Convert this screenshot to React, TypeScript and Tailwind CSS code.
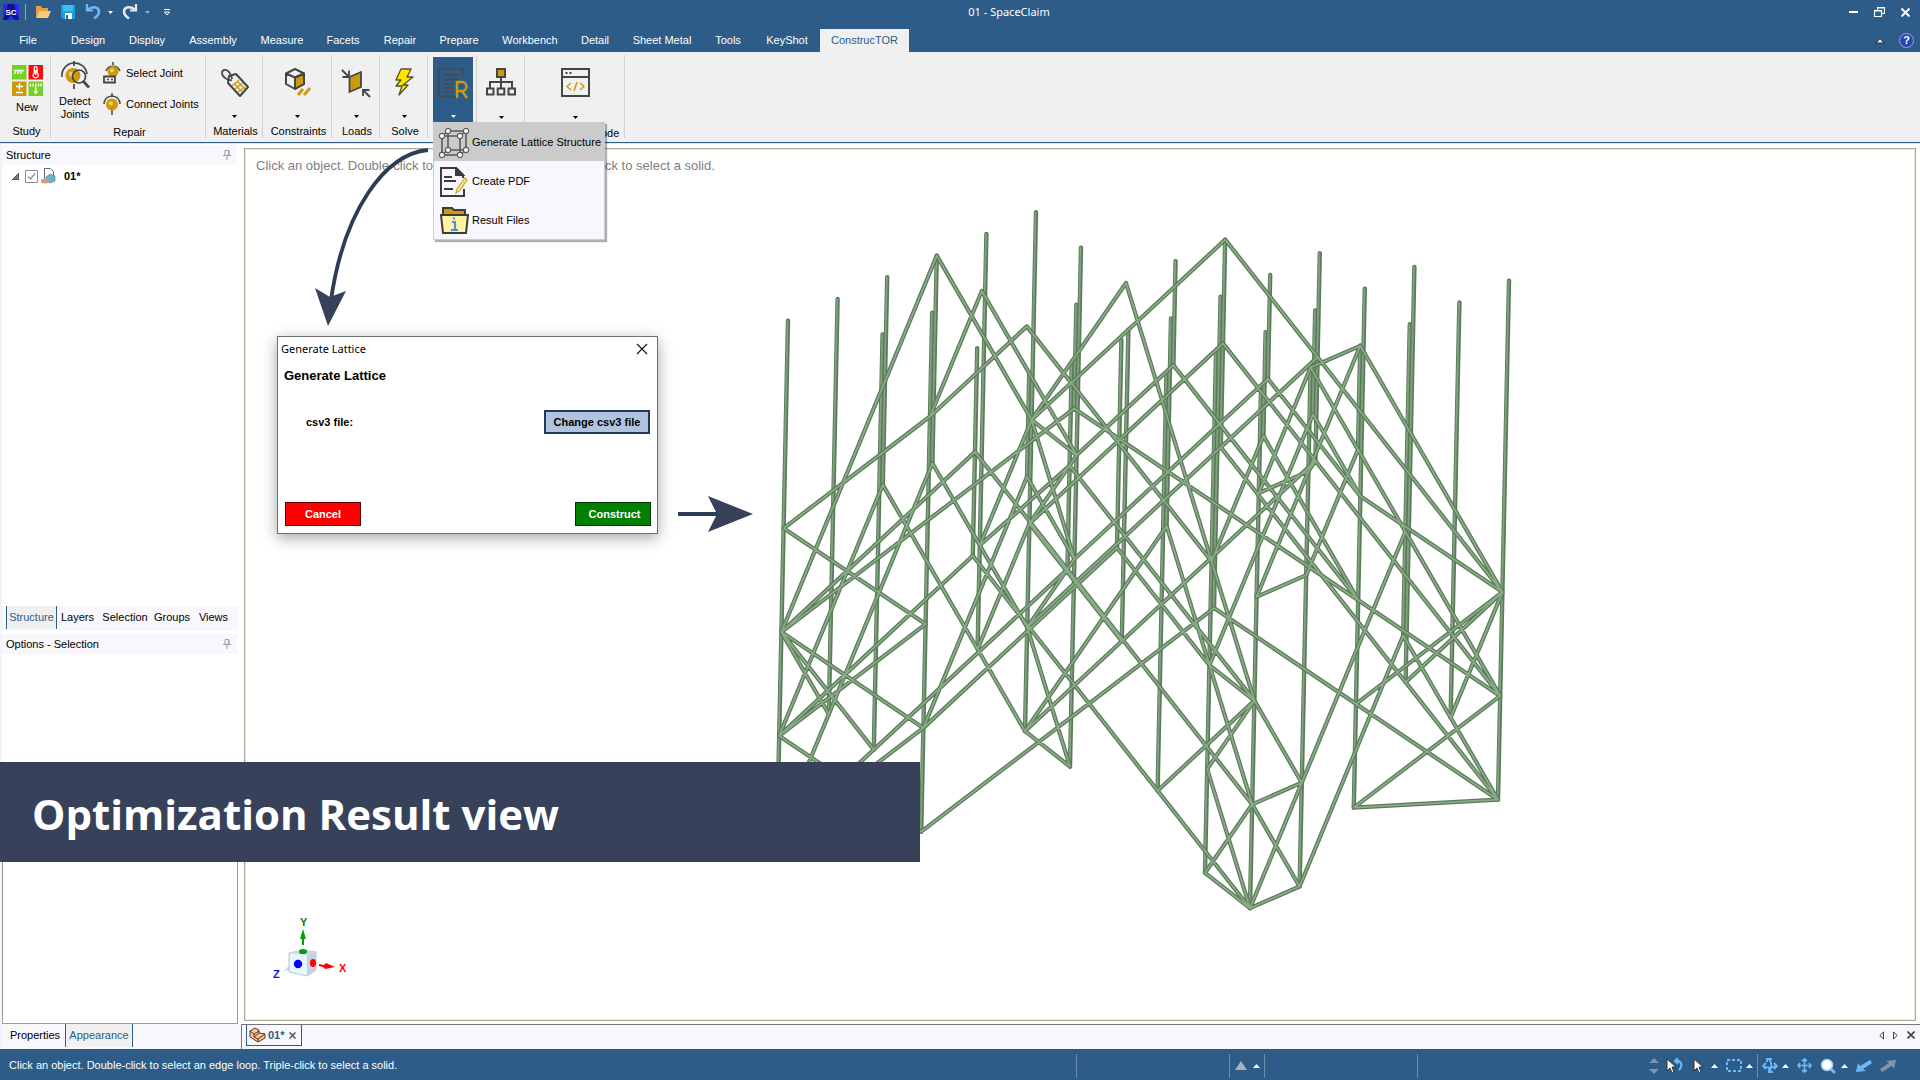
import React from "react";

/* ---------- lattice model ---------- */

type Node = [number, number, number];

const project = ([i, j, k]: Node) => [
  788 + 49.6 * i + 45 * j - 2.2 * k,
  320.7 - 21.7 * i + 35.4 * j + 103.8 * k,
];

// column i, column j, first level, last level
const columns: [number, number, number, number][] = [
  [0, 0, 0, 5], [1, 0, 0, 4], [2, 0, 0, 2], [1, 1, 0, 4], [3, 0, 0, 2], [2, 1, 0, 5],
  [4, 0, 0, 4], [2, 2, 0, 2], [5, 0, 0, 5], [4, 1, 1, 2], [5, 1, 0, 5], [3, 3, 0, 2],
  [4, 2, 0, 1], [6, 1, 1, 4], [4, 3, 0, 2], [6, 2, 0, 1], [5, 3, 0, 2], [4, 4, 0, 4],
  [7, 2, 0, 2], [6, 3, 0, 3], [5, 4, 0, 5], [7, 3, 0, 1], [6, 4, 0, 1], [5, 5, 0, 5],
  [8, 3, 0, 2], [7, 4, 0, 1], [6, 5, 0, 5], [8, 4, 0, 5], [7, 5, 0, 1], [9, 4, 0, 4],
  [8, 5, 0, 3], [9, 5, 0, 4], [10, 5, 0, 5],
];

// each row holds two nodes: i j k  i j k
const braces: [number, number, number, number, number, number][] = [
  [3, 0, 0, 0, 0, 3], [3, 0, 0, 5, 0, 2], [3, 0, 2, 0, 0, 5], [3, 1, 0, 2, 1, 1],
  [3, 1, 0, 5, 1, 2], [3, 2, 0, 2, 1, 1], [2, 1, 1, 0, 0, 2], [3, 2, 0, 5, 4, 2],
  [5, 2, 0, 5, 0, 2], [5, 2, 0, 5, 5, 3], [7, 2, 0, 5, 0, 2], [7, 2, 0, 10, 5, 3],
  [5, 0, 2, 4, 0, 3], [5, 0, 2, 5, 1, 2], [5, 0, 2, 5, 1, 3], [4, 1, 2, 2, 1, 4],
  [4, 1, 2, 5, 1, 3], [6, 2, 1, 5, 1, 2], [3, 3, 1, 4, 0, 3], [5, 1, 2, 5, 0, 3],
  [7, 2, 1, 5, 0, 3], [3, 3, 1, 5, 5, 3], [4, 2, 1, 0, 0, 3], [4, 2, 1, 10, 5, 4],
  [2, 2, 1, 0, 0, 3], [2, 2, 1, 5, 5, 4], [5, 0, 3, 6, 1, 4], [4, 3, 2, 5, 4, 3],
  [2, 0, 2, 0, 0, 4], [2, 0, 2, 5, 0, 5], [3, 0, 2, 5, 0, 4], [2, 2, 2, 5, 5, 5],
  [2, 2, 2, 0, 0, 4], [0, 0, 2, 2, 1, 3], [2, 1, 3, 0, 0, 4], [0, 0, 3, 2, 1, 4],
  [0, 0, 3, 1, 1, 4], [0, 0, 3, 1, 0, 4], [0, 0, 4, 2, 1, 5], [2, 1, 4, 0, 0, 5],
  [0, 0, 5, 3, 3, 2], [7, 3, 1, 5, 1, 3], [2, 1, 4, 4, 3, 2], [8, 3, 1, 5, 0, 4],
  [5, 1, 3, 5, 0, 4], [5, 0, 4, 5, 1, 5], [4, 0, 4, 5, 0, 3], [5, 0, 5, 5, 1, 5],
  [5, 0, 5, 5, 3, 2], [8, 3, 2, 5, 0, 5], [2, 1, 5, 6, 3, 3], [6, 3, 3, 10, 5, 5],
  [7, 3, 1, 8, 4, 2], [8, 4, 2, 10, 5, 3], [7, 2, 1, 10, 5, 4], [6, 2, 1, 8, 4, 3],
  [7, 2, 2, 10, 5, 5], [6, 4, 1, 5, 4, 2], [6, 4, 1, 8, 4, 3], [7, 4, 1, 8, 4, 2],
  [7, 4, 1, 5, 4, 3], [6, 5, 0, 5, 5, 1], [6, 5, 0, 10, 5, 4], [7, 5, 0, 6, 5, 0],
  [7, 5, 0, 5, 5, 2], [7, 5, 0, 10, 5, 3], [5, 5, 1, 6, 5, 1], [6, 5, 1, 8, 3, 2],
  [7, 5, 1, 6, 5, 2], [6, 5, 2, 5, 5, 2], [8, 5, 2, 6, 5, 4], [8, 5, 3, 6, 5, 5],
  [8, 5, 3, 10, 5, 5], [10, 5, 3, 9, 5, 4], [10, 5, 3, 8, 4, 4], [10, 5, 3, 9, 4, 4],
  [10, 5, 4, 8, 4, 5], [8, 4, 5, 10, 5, 5], [5, 3, 2, 5, 5, 4], [5, 4, 4, 5, 5, 5],
  [5, 4, 3, 5, 5, 3], [5, 5, 3, 5, 4, 4], [5, 5, 3, 4, 4, 4], [5, 5, 3, 6, 5, 4],
  [6, 5, 4, 5, 5, 4], [5, 5, 4, 5, 4, 5], [5, 5, 4, 6, 5, 5], [6, 5, 4, 5, 5, 5],
  [5, 4, 5, 5, 5, 5], [5, 5, 5, 6, 5, 5],
];

const segment = (a: Node, b: Node) => {
  const [x1, y1] = project(a);
  const [x2, y2] = project(b);
  return `M${x1.toFixed(1)} ${y1.toFixed(1)}L${x2.toFixed(1)} ${y2.toFixed(1)}`;
};

const columnPath = columns.map(([i, j, a, b]) => segment([i, j, a], [i, j, b])).join("");
const bracePath = braces.map((e) => segment([e[0], e[1], e[2]], [e[3], e[4], e[5]])).join("");

function Lattice() {
  return (
    <svg className="absolute left-[515px] top-[41px] h-[740px] w-[780px]" viewBox="760 190 780 740" fill="none" strokeLinecap="round">
      <path d={columnPath} stroke="#5a7b58" strokeWidth="4.4" />
      <path d={columnPath} stroke="#82a180" strokeWidth="1.8" transform="translate(-0.4 0)" />
      <path d={bracePath} stroke="#5a7b58" strokeWidth="4.2" />
      <path d={bracePath} stroke="#8bab88" strokeWidth="1.8" />
    </svg>
  );
}

/* ---------- icons ---------- */

const G = "#454545";
const O = "#cc9a0b";

const Caret = ({ className = "" }: { className?: string }) => (
  <svg className={"h-[3px] w-[5px] " + className} viewBox="0 0 5 3"><path d="M0 0h5L2.500 3z" fill="currentColor" /></svg>
);
const CaretUp = () => (
  <svg className="h-1 w-[7px] text-white" viewBox="0 0 7 4"><path d="M0 4h7L3.5 0z" fill="currentColor" /></svg>
);

const NewIcon = () => (
  <svg className="h-[31px] w-[31px]" viewBox="0 0 31 31" fill="none" stroke="#fff" strokeWidth="1.3">
    <path d="M0 0h14.500v14.500H0zM16.500 16.500H31V31H16.500z" fill="#76cf26" stroke="none" />
    <path d="M16.500 0H31v14.500H16.500z" fill="#f80c12" stroke="none" />
    <path d="M0 16.500h14.500V31H0z" fill={O} stroke="none" />
    <path d="M2 5.500h10M4 6l-1.500 3M7 6L5.500 9M10 6L8.500 9" />
    <path d="M22.300 3a1.400 1.400 0 0 1 2.800 0v5a2.600 2.600 0 1 1-2.800 0zM23.700 5v5" />
    <path d="M4 21.500h7M7.500 18v7M4 27.500h7" />
    <path d="M18.500 18.500v3M21 18.500v3M23.700 18.500V28M26.500 18.500v3M29 18.500v3M22 26l1.700 2.500L25.500 26" />
  </svg>
);

const Ball = ({ cx, cy, r }: { cx: number; cy: number; r: number }) => (
  <>
    <circle cx={cx} cy={cy} r={r} fill={O} stroke="none" />
    <circle cx={cx - r * 0.2} cy={cy - r * 0.2} r={r * 0.35} fill="#ecd07a" stroke="none" />
  </>
);

const DetectIcon = () => (
  <svg className="h-7 w-[30px]" viewBox="0 0 30 28" fill="none" stroke={G} strokeWidth="2">
    <path d="M2 16A12.500 12.500 0 0 1 27 13M14 0v5M14 23v5" strokeWidth="1.700" />
    <Ball cx={13} cy={14.500} r={7.500} />
    <circle cx="19" cy="15.500" r="6.500" strokeWidth="1.700" />
    <path d="M23.500 20.500l5.500 6" strokeWidth="2.600" />
  </svg>
);
const SelectJointIcon = () => (
  <svg className="h-[22px] w-[18px]" viewBox="0 0 18 22" fill="none" stroke={G} strokeWidth="1.500">
    <path d="M3 9a7.500 7.500 0 0 1 14 0M10 0v3" />
    <Ball cx={10} cy={9.500} r={5.500} />
    <path d="M1 14.500h11v6H1z" fill="#efefef" strokeWidth="1.800" />
    <path d="M4 17.500h2M8 17.500h2" />
  </svg>
);
const ConnectJointIcon = () => (
  <svg className="h-[22px] w-[18px]" viewBox="0 0 18 22" fill="none" stroke={G} strokeWidth="1.500">
    <path d="M1 11a8 8 0 0 1 16 0M9 0v4M9 17v5" />
    <Ball cx={9} cy={11.500} r={6} />
  </svg>
);
const MaterialsIcon = () => (
  <svg className="h-[30px] w-[30px]" viewBox="0 0 30 30" fill="none" stroke={G} strokeWidth="2">
    <path d="M8 15l1-7 7-2 12 13-8 9z" fill="#efefef" strokeLinejoin="round" />
    <path d="M14 15l8 9M17 13l8 8M12 18l7-6M15 21l8-6M18 24l7-5" stroke={O} strokeWidth="1.300" />
    <path d="M12 12C8 13 2 9 2 5s5-4 7-1 3 5 3 7" strokeWidth="1.700" />
  </svg>
);
const ConstraintsIcon = () => (
  <svg className="h-[28px] w-[28px]" viewBox="0 0 28 28" fill="none" stroke={G} strokeWidth="2" strokeLinejoin="round">
    <path d="M11 9.500l9-4V16l-9 5z" fill={O} />
    <path d="M2 5.500L11 1l9 4.500V16l-9 5-9-5zM2 5.500l9 4 9-4M11 9.500V21" />
    <path d="M14 27l5-6M20 27l6-7" stroke={O} strokeWidth="3" />
  </svg>
);
const LoadsIcon = () => (
  <svg className="h-[30px] w-[30px]" viewBox="0 0 30 30" fill="none" stroke={G} strokeWidth="1.800">
    <path d="M8.500 9L20 4v15L8.500 24z" fill={O} />
    <path d="M1 2l6 6M8 2.500V9H1.500M29 29l-6-6M22 28v-6h6.500" />
  </svg>
);
const SolveIcon = () => (
  <svg className="h-[28px] w-5" viewBox="0 0 20 28"><path d="M7 1h10l-4 8h6L9 17h5L5 27l3-9H2l5-6H2z" fill="#ffe500" stroke="#55502a" strokeWidth="1.300" strokeLinejoin="round" /></svg>
);
const ReportIcon = () => (
  <svg className="h-8 w-8" viewBox="0 0 32 32" fill="none" stroke="#404c57" strokeWidth="2.200">
    <path d="M26 11V1.500H2v28h18" />
    <path d="M6 8h16M6 12.500h16M6 17h10M6 21h10M6 25h10" />
    <path d="M20 31V15h5a4.500 4.500 0 0 1 0 9h-5M25 24l5 7" stroke={O} strokeWidth="2.400" />
  </svg>
);
const TreeIcon = () => (
  <svg className="h-[28px] w-[30px]" viewBox="0 0 30 28" fill="none" stroke={G} strokeWidth="2">
    <path d="M11 1h8v8h-8z" fill={O} />
    <path d="M15 9v5M4 20v-6h22v6M15 14v6M1 20.500h6.500v6H1zM11.700 20.500h6.600v6h-6.600zM22.500 20.500H29v6h-6.500z" />
  </svg>
);
const CodeIcon = () => (
  <svg className="h-[29px] w-[29px]" viewBox="0 0 29 29" fill="none" stroke={G} strokeWidth="2">
    <path d="M1 1h27v27H1zM1 9h27" /><path d="M4.500 5h2M8.500 5h2" />
    <path d="M10 15l-4 3.500 4 3.500M19 15l4 3.500-4 3.500M16 14l-3 9" stroke={O} strokeWidth="1.500" />
  </svg>
);
const LatticeIcon = () => (
  <svg className="h-[30px] w-8" viewBox="0 0 32 30" fill="none" stroke="#5a5a5a" strokeWidth="1.600">
    <path d="M4 8h18v19H4zM10 3h18v19H10zM4 8l6-5M22 8l6-5M4 27l6-5M22 27l6-5" />
    <g fill="#fff">
      {[[4, 8], [22, 8], [4, 27], [22, 27], [10, 3], [28, 3], [10, 22], [28, 22]].map(([x, y]) => (
        <circle key={`${x}-${y}`} cx={x} cy={y} r="2.600" strokeWidth="1.100" />
      ))}
    </g>
  </svg>
);
const PdfIcon = () => (
  <svg className="h-[30px] w-8" viewBox="0 0 32 30" fill="none" stroke="#3c3c3c" strokeWidth="2">
    <path d="M26 22v7H3V1h15l7 7v3" /><path d="M18 1v7h7z" fill="#3c3c3c" />
    <path d="M6 10h8M6 14h12M6 22h9" />
    <path d="M18 26l1-4 8-11 2 2-8 11z" stroke="#d9a92c" strokeWidth="1.300" fill="#fff3c8" />
  </svg>
);
const ResultIcon = () => (
  <svg className="h-[29px] w-8" viewBox="0 0 32 29" fill="none" stroke="#3c3c3c" strokeWidth="2">
    <path d="M5 9V2h9l2 2h11v5z" fill={O} />
    <path d="M3 9h27l-2 18H5z" fill="#fff5a0" />
    <path d="M14 16h3v8M13 24h7M16 11.500v2" stroke="#4a90f0" strokeWidth="2.200" />
  </svg>
);
const Pin = () => (
  <svg className="h-[10px] w-2" viewBox="0 0 8 10" fill="none" stroke="#9a9aa0"><path d="M2 .5h4v5H2zM0 5.500h8M4 6v4M5.500 1v4" /></svg>
);
const Cursor = () => (
  <svg className="h-4 w-[11px]" viewBox="0 0 11 16"><path d="M1 1v12l3-3 2 5 2-1-2-5h4z" fill="#fff" stroke="#333" strokeWidth="1" /></svg>
);

/* ---------- title bar and ribbon ---------- */

function TitleBar() {
  return (
    <header className="relative flex h-6 items-center bg-[#2d5c88] pl-[3px] text-white">
      <div className="flex items-center">
        <svg className="h-4 w-4" viewBox="0 0 16 16"><path d="M0 0h16v16H0z" fill="#2a2af0" /><path d="M0 16L5 0h6l5 16h-4L8 11l-4 5z" fill="#10108a" /><text x="8" y="11" fontSize="8" fontWeight="700" textAnchor="middle" fill="#fff" fontFamily="Liberation Sans">SC</text></svg>
        <span className="mx-[6px] h-4 w-px bg-[#8ba6c0]" />
        <button aria-label="Open" className="ml-[3px]">
          <svg className="h-4 w-4" viewBox="0 0 16 16"><path d="M1 2h5l1 2h6v3H4l-3 7z" fill="#e2a040" /><path d="M4 7h12l-3 7H1z" fill="#fbc877" /></svg>
        </button>
        <button aria-label="Save" className="ml-[10px]">
          <svg className="h-[14px] w-[14px]" viewBox="0 0 14 14"><path d="M0 0h14v14H2l-2-2z" fill="#1c9ed8" /><path d="M2 0h10v6H2z" fill="#3cc0f4" /><path d="M4 8h7v6H4z" fill="#fff" /><path d="M5 10h2v4H5z" fill="#1a6fa0" /></svg>
        </button>
        <button aria-label="Undo" className="ml-[10px] flex items-center gap-[7px]">
          <svg className="h-4 w-4" viewBox="0 0 16 16" fill="none" stroke="#72b5f5" strokeWidth="2.600"><path d="M3 5.500c6-4 11-2 11 2 0 3-2 5-5 7" /><path d="M2 0v6.500h6" strokeWidth="2.200" /></svg>
          <Caret />
        </button>
        <button aria-label="Redo" className="ml-[9px] flex items-center gap-[7px]">
          <svg className="h-4 w-4" viewBox="0 0 16 16" fill="none" stroke="#e8e8e8" strokeWidth="2.600"><path d="M13 5.500c-6-4-11-2-11 2 0 3 2 5 5 7" /><path d="M14 0v6.500H8" strokeWidth="2.200" /></svg>
          <Caret className="text-[#9fb0c0]" />
        </button>
        <button aria-label="Customize toolbar" className="ml-[14px]">
          <svg className="h-[7px] w-[6px]" viewBox="0 0 6 7" fill="none" stroke="#fff"><path d="M0 .5h6M.5 3L3 6l2.500-3z" /></svg>
        </button>
      </div>
      <h1 className="absolute inset-x-0 pl-[98px] text-center font-['Noto_Sans','Open_Sans',sans-serif] text-[11px] leading-6">01 - SpaceClaim</h1>
      <div className="relative ml-auto flex items-center gap-4 pr-[10px]">
        <button aria-label="Minimize"><svg className="h-[10px] w-[9px]" viewBox="0 0 9 10"><path d="M0 4h9v2H0z" fill="#fff" /></svg></button>
        <button aria-label="Restore"><svg className="h-[10px] w-[11px]" viewBox="0 0 11 10" fill="none" stroke="#fff"><path d="M3.500 3V.5h7v6H8M.5 3.500h7v6h-7zM.5 4h7M3 1h8" strokeWidth="1.200" /></svg></button>
        <button aria-label="Close"><svg className="h-[9px] w-[9px]" viewBox="0 0 9 9" stroke="#fff" strokeWidth="2"><path d="M.5.5l8 8M8.500.5l-8 8" /></svg></button>
      </div>
    </header>
  );
}

const tabs: [string, string][] = [
  ["File", "w-14"], ["Design", "w-16"], ["Display", "w-[54px]"], ["Assembly", "w-[78px]"],
  ["Measure", "w-[60px]"], ["Facets", "w-[62px]"], ["Repair", "w-[52px]"], ["Prepare", "w-[66px]"],
  ["Workbench", "w-[76px]"], ["Detail", "w-[54px]"], ["Sheet Metal", "w-20"], ["Tools", "w-[52px]"],
  ["KeyShot", "w-[66px]"],
];

function TabRow() {
  return (
    <nav className="flex h-7 items-end bg-[#2d5c88] text-[11px] text-white">
      {tabs.map(([t, w]) => (
        <button key={t} className={`h-[23px] text-center ${w}`}>{t}</button>
      ))}
      <button className="h-[23px] w-[89px] bg-[#f0f0f0] text-[#2d5c88]">ConstrucTOR</button>
      <div className="ml-auto flex h-[23px] items-center gap-[14px] pr-[6px]">
        <button aria-label="Collapse ribbon"><svg className="h-[7px] w-[10px]" viewBox="0 0 10 7"><path d="M1 6l4-4.500L9 6z" fill="#e8eef4" stroke="#333" /></svg></button>
        <button aria-label="Help" className="flex h-[15px] w-[15px] items-center justify-center rounded-full border border-[#9fa8c4] bg-[#2446b8] text-[11px] font-bold leading-none">?</button>
      </div>
    </nav>
  );
}

function Group({ label, width, icon, children }: { label: string; width: string; icon?: React.ReactNode; children?: React.ReactNode }) {
  return (
    <section className={`relative flex flex-col pt-1 ${width}`}>
      <div className="h-[65px]">
        {icon ? (
          <button aria-label={label || "More"} className="flex h-full w-full flex-col items-center justify-between pb-[2px] pt-3">
            {icon}
            <Caret className="text-black" />
          </button>
        ) : children}
      </div>
      <div className="whitespace-nowrap pl-[2px] text-center leading-[22px]">{label}</div>
      <span className="absolute right-0 top-[3px] h-[83px] w-px bg-[#d0d0d0]" />
    </section>
  );
}

function Ribbon() {
  return (
    <div className="relative z-20 flex h-[91px] border-b border-[#2d5c88] bg-[#f0f0f0] text-[11px] text-black shadow-[0_1px_0_#dfe6ee]">
      <Group label="Study" width="w-[51px]">
        <button className="flex w-full flex-col items-center gap-[3px] pl-[3px] pt-[9px] leading-4"><NewIcon />New</button>
      </Group>
      <Group label="Repair" width="w-[155px]">
        <div className="flex pl-[6px]">
          <button className="flex w-[36px] flex-col items-center gap-[6px] pt-[5px] leading-[13px]"><DetectIcon /><span>Detect Joints</span></button>
          <div className="ml-[10px] flex flex-col gap-[9px] pt-[6px]">
            <button className="flex items-center gap-[5px]"><SelectJointIcon />Select Joint</button>
            <button className="flex items-center gap-[5px] whitespace-nowrap"><ConnectJointIcon />Connect Joints</button>
          </div>
        </div>
      </Group>
      <Group label="Materials" width="w-[57px]" icon={<MaterialsIcon />} />
      <Group label="Constraints" width="w-[69px]" icon={<ConstraintsIcon />} />
      <Group label="Loads" width="w-12" icon={<LoadsIcon />} />
      <Group label="Solve" width="w-12" icon={<SolveIcon />} />
      <section className="relative w-[49px] pl-[5px] pt-[5px]">
        <button aria-label="Report" aria-expanded="true" className="flex h-[65px] w-10 flex-col items-center justify-between bg-[#2d5c88] pb-1 pt-[10px] text-white">
          <ReportIcon />
          <Caret />
        </button>
        <ResultMenu />
        <span className="absolute right-0 top-[3px] h-[83px] w-px bg-[#d0d0d0]" />
      </section>
      <Group label="" width="w-12" icon={<TreeIcon />} />
      <Group label="" width="w-[100px]" icon={<CodeIcon />} />
      <div className="-ml-[24px] w-10 self-end leading-[18px]">ode</div>
    </div>
  );
}

function ResultMenu() {
  const items: [string, React.ReactNode][] = [
    ["Generate Lattice Structure", <LatticeIcon />],
    ["Create PDF", <PdfIcon />],
    ["Result Files", <ResultIcon />],
  ];
  return (
    <ul className="absolute left-[5px] top-[70px] z-30 w-[172px] border border-t-0 border-[#cbcbcb] bg-[#f7f7fc] shadow-[2px_2px_1px_#00000050]">
      {items.map(([t, icon], n) => (
        <li key={t}>
          <button className={"flex h-[39px] w-full items-center gap-[2px] whitespace-nowrap pl-1 pt-[2px] " + (n === 0 ? "bg-[#cbcbcb]" : "")}>
            {icon}
            {t}
          </button>
        </li>
      ))}
    </ul>
  );
}

/* ---------- side panels ---------- */

function PanelHeader({ title }: { title: string }) {
  return (
    <div className="mr-1 flex h-5 items-center justify-between bg-[#f7f7fc] pl-1 pr-[6px]">
      <h2>{title}</h2>
      <button aria-label="Pin panel"><Pin /></button>
    </div>
  );
}

function Sidebar() {
  return (
    <aside className="flex w-[241px] flex-col border-l-2 border-[#f2f2fa] bg-white text-[11px] text-black">
      <div className="flex h-[463px] flex-col pt-[2px]">
        <PanelHeader title="Structure" />
        <label className="flex items-center gap-[2px] pl-[10px] pt-[3px] font-bold">
          <svg className="mr-1 h-[7px] w-[7px]" viewBox="0 0 7 7"><path d="M7 0v7H0z" fill="#777" stroke="#333" strokeWidth=".8" /></svg>
          <input type="checkbox" defaultChecked className="peer sr-only" />
          <svg className="h-[13px] w-[13px]" viewBox="0 0 13 13" fill="none" stroke="#909090"><path d="M.5.5h12v12H.5z" /><path d="M3 6.500l2.500 2.500 4.500-5.500" strokeWidth="1.300" /></svg>
          <svg className="ml-px h-4 w-[15px]" viewBox="0 0 15 16"><path d="M3.500.5h6l3 3v9h-9z" fill="#fff" stroke="#5f6f80" /><path d="M5 9l4-3 5 2v5l-5 2-4-2z" fill="#6db3d0" stroke="#3a7898" strokeWidth=".6" /><ellipse cx="4" cy="13" rx="4" ry="2.500" fill="#cf9c75" /></svg>
          <span className="ml-[6px]">01*</span>
        </label>
      </div>
      <div className="mr-[3px] flex h-[25px] items-start bg-[#f7f7fc] pl-1 leading-[23px]">
        <button className="w-[51px] border-x border-[#2d5c88] bg-[#f0f0f0] text-[#2d5c88]">Structure</button>
        <button className="w-[41px]">Layers</button>
        <button className="w-[54px]">Selection</button>
        <button className="w-10">Groups</button>
        <button className="w-[43px]">Views</button>
      </div>
      <div className="flex h-[226px] flex-col pt-[3px]">
        <PanelHeader title="Options - Selection" />
      </div>
      <div className="mr-[3px] flex-1 border border-t-0 border-[#9a9aa0]" />
      <div className="flex h-[25px] items-start bg-[#f7f7fc] pl-[3px] leading-[23px]">
        <button className="w-[60px]">Properties</button>
        <button className="w-[68px] border-x border-[#2d5c88] bg-[#f0f0f0] text-[#2d5c88]">Appearance</button>
      </div>
    </aside>
  );
}

/* ---------- viewport ---------- */

function Dialog() {
  return (
    <form role="dialog" aria-label="Generate Lattice" className="absolute left-8 top-[187px] flex h-[198px] w-[381px] flex-col border border-[#707070] bg-white text-[11px] font-bold text-black shadow-[0_4px_14px_#00000059]">
      <div className="flex h-6 items-center justify-between pl-[3px] pr-[9px] font-['Noto_Sans','Open_Sans',sans-serif] font-normal">
        <span>Generate Lattice</span>
        <button type="button" aria-label="Close"><svg className="h-3 w-3" viewBox="0 0 12 12" stroke="#111" strokeWidth="1.100"><path d="M1 1l10 10M11 1L1 11" /></svg></button>
      </div>
      <h2 className="pl-[6px] pt-[5px] text-[13px] leading-5">Generate Lattice</h2>
      <div className="mt-6 flex items-center justify-between pl-7 pr-[7px]">
        <label htmlFor="csv">csv3 file:</label>
        <button id="csv" type="button" className="h-6 w-[106px] whitespace-nowrap border-2 border-[#203a5e] bg-[#b0c4de]">Change csv3 file</button>
      </div>
      <div className="mb-[7px] mt-auto flex justify-between pl-[7px] pr-[6px] text-white">
        <button type="button" className="h-6 w-[76px] border border-[#5a0000] bg-[#ff0000]">Cancel</button>
        <button type="button" className="h-6 w-[76px] border border-[#003400] bg-[#008000] pl-[3px]">Construct</button>
      </div>
    </form>
  );
}

function AxisTriad() {
  return (
    <svg className="absolute bottom-[37px] left-[26px] h-[66px] w-[80px]" viewBox="0 0 80 66" fontFamily="Liberation Sans" fontWeight="700" fontSize="11">
      <text x="29" y="9" fill="#0a7a0a">Y</text>
      <text x="68" y="55" fill="#f00">X</text>
      <text x="2" y="61" fill="#1010f0">Z</text>
      <path d="M12 54l8-7 2 6z" fill="#d8d8f8" />
      <path d="M18 36l14-3 13 2v18l-9 6-18-4z" fill="#e6f6fb" stroke="#a9b5cc" strokeWidth=".8" />
      <path d="M36 38l9-3v18l-9 6z" fill="#c6cfe4" />
      <path d="M18 36l14-3 13 2-9 3z" fill="#ccd6ec" />
      <path d="M32 12l3 10h-2v6h-2v-6h-2z" fill="#00a000" />
      <path d="M64 50l-10 2-2-2-4-1v-2l5 1 2-2z" fill="#f00" />
      <ellipse cx="32" cy="34.500" rx="4" ry="2.600" fill="#00a000" />
      <circle cx="27" cy="47" r="4.200" fill="#0000ff" />
      <ellipse cx="42" cy="46" rx="3" ry="4" fill="#f00" />
    </svg>
  );
}

function Viewport() {
  return (
    <main className="flex min-w-0 flex-1 flex-col bg-white">
      <div className="relative mb-[3px] ml-[3px] mr-1 mt-[5px] flex-1 border border-[#aca793] shadow-[inset_1px_1px_0_#efe9d4,inset_-1px_-1px_0_#efe9d4]">
        <p className="pl-[11px] pt-[7px] text-[13px] leading-[20px] text-[#808080]">Click an object. Double-click to select an edge loop. Triple-click to select a solid.</p>
        <Lattice />
        <svg className="absolute -top-[9px] left-[55px] h-[190px] w-[140px]" viewBox="300 140 140 190">
          <path d="M428 150C385 154 344 210 331 300" fill="none" stroke="#2f3c58" strokeWidth="3.800" />
          <path d="M315 288l15 9 16-6-18 35z" fill="#37425a" />
        </svg>
        <svg className="absolute left-[433px] top-[346px] h-[38px] w-[76px]" viewBox="678 495 76 38">
          <path d="M678 514h42" stroke="#2f3c58" strokeWidth="4" />
          <path d="M708 496l45 18-45 18 9-18z" fill="#37425a" />
        </svg>
        <Dialog />
        <AxisTriad />
      </div>
      <div className="flex h-[25px] items-start border-l border-t border-[#77757f] bg-[#f7f7fc] pl-1 text-[11px]">
        <div className="flex h-[21px] w-[56px] items-center gap-[2px] border border-t-0 border-[#2d5c88] pl-[2px] font-bold text-[#2d5c88]">
          <svg className="h-4 w-[17px]" viewBox="0 0 17 16" fill="#f3c89a" stroke="#5a3418" strokeLinejoin="round"><path d="M1 4l5-3 4 2v3l6 1v4l-7 4-8-5z" /><path d="M1 4l4 3 5-3M5 7v3l4 2 7-5M9 12v3M5 10l5-4" fill="none" /></svg>
          <span>01*</span>
          <button aria-label="Close 01*" className="ml-[2px]"><svg className="h-[7px] w-[7px]" viewBox="0 0 7 7" stroke="#555" strokeWidth="1.500"><path d="M.5.5l6 6M6.500.5l-6 6" /></svg></button>
        </div>
        <div className="ml-auto flex h-5 items-center gap-[9px] pr-[5px]">
          <button aria-label="Previous"><svg className="h-[9px] w-[5px]" viewBox="0 0 5 9" fill="none" stroke="#444"><path d="M4.500 1v7L.8 4.500z" /></svg></button>
          <button aria-label="Next"><svg className="h-[9px] w-[5px]" viewBox="0 0 5 9" fill="none" stroke="#444"><path d="M.5 1v7l3.700-3.500z" /></svg></button>
          <button aria-label="Close document"><svg className="h-2 w-2" viewBox="0 0 8 8" stroke="#444" strokeWidth="1.700"><path d="M.5.5l7 7M7.500.5l-7 7" /></svg></button>
        </div>
      </div>
    </main>
  );
}

function StatusBar() {
  return (
    <footer className="flex h-[31px] items-center bg-[#2d5c88] pl-[9px] pt-[2px] text-[11px] text-white">
      <span className="flex-1">Click an object. Double-click to select an edge loop. Triple-click to select a solid.</span>
      <div className="flex h-6 w-[153px] items-center border-l border-[#6d8fae]" />
      <button aria-label="Messages" className="flex h-6 w-9 items-center justify-center gap-[6px] border-x border-[#6d8fae]">
        <svg className="h-[9px] w-3" viewBox="0 0 12 9"><path d="M0 9h12L6 0z" fill="#a9b1ba" /></svg>
        <CaretUp />
      </button>
      <div className="h-6 w-[153px] border-r border-[#6d8fae]" />
      <div className="flex w-[502px] items-center pl-[231px]">
        <svg className="h-4 w-[10px]" viewBox="0 0 10 16" fill="#7f95a8"><path d="M0 5h10L5 0zM0 11h10l-5 5z" /></svg>
        <button aria-label="Revert selection" className="ml-[7px] flex"><Cursor /><svg className="-ml-1 h-4 w-[10px]" viewBox="0 0 10 16" fill="none" stroke="#6cb8f8" strokeWidth="2"><path d="M2 3c7-1 8 5 4 9M5 0L2 3l3 3" /></svg></button>
        <button aria-label="Select" className="ml-[10px]"><Cursor /></button>
        <span className="ml-[7px]"><CaretUp /></span>
        <button aria-label="Box select" className="ml-2"><svg className="h-[13px] w-4" viewBox="0 0 16 13" fill="none" stroke="#6cb8f8" strokeWidth="2" strokeDasharray="3 2"><path d="M1 1h14v11H1z" /></svg></button>
        <span className="ml-1"><CaretUp /></span>
        <span className="ml-1 h-6 w-px bg-[#6d8fae]" />
        <button aria-label="Spin" className="ml-1"><svg className="h-4 w-4" viewBox="0 0 16 16" fill="none" stroke="#6cb8f8" strokeWidth="1.800"><path d="M1 8c4 2 9 2 13 0M4 5L1 8l3 3M12 5l3 3-3 3M7 1c3 4 3 9 0 13M5 4V1h5M11 14H7v-4" /></svg></button>
        <span className="ml-1"><CaretUp /></span>
        <button aria-label="Pan" className="ml-2"><svg className="h-[15px] w-[15px]" viewBox="0 0 15 15" fill="none" stroke="#6cb8f8" strokeWidth="1.700"><path d="M7.500 1v13M1 7.500h13M5 3l2.500-2L10 3M5 12l2.500 2 2.500-2M3 5L1 7.500 3 10M12 5l2 2.500-2 2.500" /></svg></button>
        <button aria-label="Zoom" className="ml-2"><svg className="h-4 w-4" viewBox="0 0 16 16"><path d="M10 10l5 5" stroke="#6cb8f8" strokeWidth="3" /><circle cx="7" cy="7" r="5.500" fill="#fff" stroke="#9fd0fa" strokeWidth="1.500" /></svg></button>
        <span className="ml-[5px]"><CaretUp /></span>
        <button aria-label="Previous view" className="ml-2"><svg className="h-3 w-4" viewBox="0 0 16 12"><path d="M0 12l2-9 2 3 10-6 2 3-9 6 3 2z" fill="#6cb8f8" /></svg></button>
        <button aria-label="Next view" className="ml-2"><svg className="h-3 w-4" viewBox="0 0 16 12"><path d="M16 0l-2 9-2-3-10 6-2-3 9-6-3-2z" fill="#7f95a8" /></svg></button>
      </div>
    </footer>
  );
}

export default function App() {
  return (
    <div className="relative flex min-h-screen flex-col bg-white font-['Liberation_Sans',Arial,sans-serif]">
      <TitleBar />
      <TabRow />
      <Ribbon />
      <div className="flex flex-1">
        <Sidebar />
        <Viewport />
      </div>
      <StatusBar />
      <div className="absolute bottom-[218px] left-0 z-10 flex h-[100px] w-[920px] max-w-full items-center bg-[#37425a] pl-8 pt-[3px] font-['Open_Sans','Noto_Sans',sans-serif] text-[42px] font-bold text-white">
        Optimization Result view
      </div>
    </div>
  );
}
